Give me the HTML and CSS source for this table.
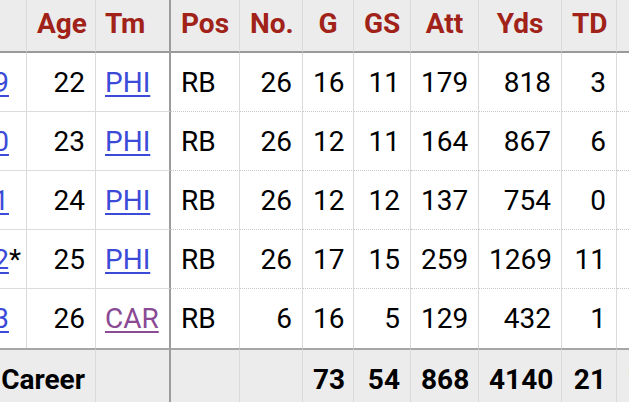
FILE: index.html
```html
<!DOCTYPE html>
<html lang="en">
<head>
<meta charset="utf-8">
<title>Rushing &amp; Receiving</title>
<link rel="stylesheet" href="styles.css">
</head>
<body>
<div class="scroller">
<table class="stats">
<colgroup>
<col class="c-year"><col class="c-age"><col class="c-tm"><col class="c-pos"><col class="c-no"><col class="c-g"><col class="c-gs"><col class="c-att"><col class="c-yds"><col class="c-td"><col class="c-1d">
</colgroup>
<thead>
<tr>
<th class="year">Year</th><th>Age</th><th class="tm left">Tm</th><th>Pos</th><th>No.</th><th>G</th><th>GS</th><th>Att</th><th>Yds</th><th>TD</th><th>1D</th>
</tr>
</thead>
<tbody>
<tr>
<td class="left frozen"><a href="#">2019</a></td><td class="num frozen">22</td><td class="left tm frozen"><a href="#">PHI</a></td><td class="left">RB</td><td class="num">26</td><td class="num">16</td><td class="num">11</td><td class="num">179</td><td class="num">818</td><td class="num">3</td><td class="num">37</td>
</tr>
<tr>
<td class="left frozen"><a href="#">2020</a></td><td class="num frozen">23</td><td class="left tm frozen"><a href="#">PHI</a></td><td class="left">RB</td><td class="num">26</td><td class="num">12</td><td class="num">11</td><td class="num">164</td><td class="num">867</td><td class="num">6</td><td class="num">41</td>
</tr>
<tr>
<td class="left frozen"><a href="#">2021</a></td><td class="num frozen">24</td><td class="left tm frozen"><a href="#">PHI</a></td><td class="left">RB</td><td class="num">26</td><td class="num">12</td><td class="num">12</td><td class="num">137</td><td class="num">754</td><td class="num">0</td><td class="num">36</td>
</tr>
<tr>
<td class="left frozen"><a href="#">2022</a>*</td><td class="num frozen">25</td><td class="left tm frozen"><a href="#">PHI</a></td><td class="left">RB</td><td class="num">26</td><td class="num">17</td><td class="num">15</td><td class="num">259</td><td class="num">1269</td><td class="num">11</td><td class="num">62</td>
</tr>
<tr class="last">
<td class="left frozen"><a href="#">2023</a></td><td class="num frozen">26</td><td class="left tm frozen"><a href="#" class="visited">CAR</a></td><td class="left">RB</td><td class="num">6</td><td class="num">16</td><td class="num">5</td><td class="num">129</td><td class="num">432</td><td class="num">1</td><td class="num">21</td>
</tr>
</tbody>
<tfoot>
<tr>
<td colspan="2" class="num">Career</td><td class="tm"></td><td></td><td></td><td class="num">73</td><td class="num">54</td><td class="num">868</td><td class="num">4140</td><td class="num">21</td><td class="num">197</td>
</tr>
</tfoot>
</table>
</div>
</body>
</html>
```
FILE: styles.css
```css
html, body {
  margin: 0;
  padding: 0;
  background: #ffffff;
}

body {
  width: 629px;
  height: 402px;
  overflow: hidden;
  font-family: Roboto, "Noto Sans", sans-serif;
}

.scroller {
  width: 629px;
  overflow: hidden;
}

.stats {
  border-collapse: separate;
  border-spacing: 0;
  table-layout: fixed;
  width: 745px;
  margin-left: -64px;
  font-size: 28px;
  color: #000;
}

.c-year { width: 91px; }
.c-age { width: 69px; }
.c-tm { width: 75px; }
.c-pos { width: 69px; }
.c-no { width: 63px; }
.c-g { width: 51px; }
.c-gs { width: 57px; }
.c-att { width: 68px; }
.c-yds { width: 83px; }
.c-td { width: 55px; }
.c-1d { width: 64px; }

.stats th,
.stats td {
  padding: 0 10px;
  white-space: nowrap;
  overflow: hidden;
  border-right: 1px solid #dadada;
}

.stats thead tr {
  height: 53px;
}

.stats th {
  background: #ececec;
  color: #a02218;
  font-weight: 700;
  text-align: center;
  padding-bottom: 4px;
  border-bottom: 2px solid #9a9a9a;
}

.stats th.left {
  text-align: left;
  padding-left: 9px;
}

.stats th.year {
  text-align: left;
  padding-left: 0;
}

.stats tbody tr {
  height: 59px;
}

.stats tbody td {
  border-bottom: 1px dotted #c8c8c8;
}

.stats tbody td.frozen {
  border-bottom: 1px solid #dcdcdc;
}

.stats tbody tr.last td {
  border-bottom: none;
}

.stats td.left {
  text-align: left;
}

.stats td.tm {
  padding-left: 9px;
}

.stats td.num {
  text-align: right;
}

.stats .tm {
  border-right: 2px solid #9c9c9c;
}

.stats tfoot tr {
  height: 61px;
}

.stats tfoot td {
  background: #ececec;
  font-weight: 700;
  border-top: 2px solid #a6a6a6;
}

.stats a {
  color: #3b4bd8;
  text-decoration: underline;
  text-underline-offset: 3px;
}

.stats a.visited {
  color: #8a4a94;
}
```
